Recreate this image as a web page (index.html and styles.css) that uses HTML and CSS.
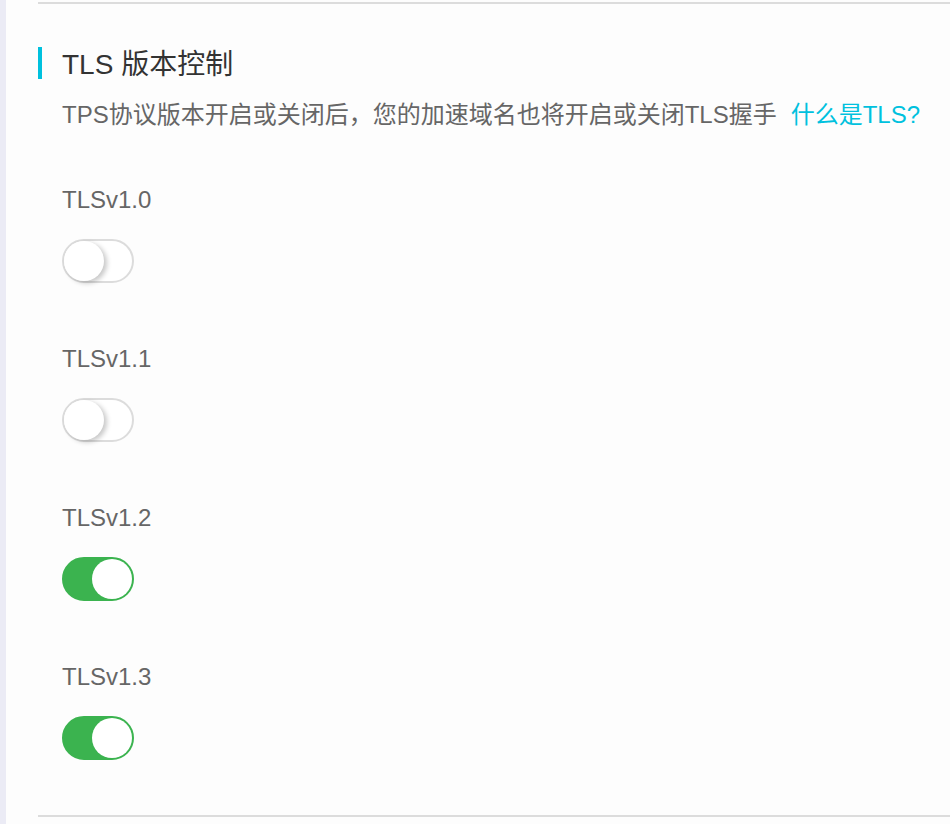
FILE: index.html
```html
<!DOCTYPE html>
<html lang="zh-CN">
<head>
<meta charset="utf-8">
<title>TLS 版本控制</title>
<link rel="stylesheet" href="styles.css">
</head>
<body>
<div class="page">
  <div class="side-strip"></div>
  <main class="main">
    <section class="section">
      <h2 class="title"><span class="title-text">TLS 版本控制</span></h2>
      <p class="desc">TPS协议版本开启或关闭后，您的加速域名也将开启或关闭TLS握手<a class="link" href="#">什么是TLS?</a></p>
      <div class="items">
        <div class="item">
          <div class="label">TLSv1.0</div>
          <span class="switch"></span>
        </div>
        <div class="item">
          <div class="label">TLSv1.1</div>
          <span class="switch"></span>
        </div>
        <div class="item">
          <div class="label">TLSv1.2</div>
          <span class="switch is-on"></span>
        </div>
        <div class="item">
          <div class="label">TLSv1.3</div>
          <span class="switch is-on"></span>
        </div>
      </div>
    </section>
  </main>
</div>
</body>
</html>
```

FILE: styles.css
```css
html, body {
  margin: 0;
  padding: 0;
  background: #fdfdfd;
}

body {
  font-family: "Liberation Sans", "Noto Sans CJK SC", sans-serif;
  color: #666;
}

.page {
  display: flex;
  min-height: 824px;
}

.side-strip {
  width: 6px;
  flex: none;
  background: #ebebf5;
}

.main {
  flex: 1;
  padding-left: 32px;
  padding-top: 2px;
}

.section {
  border-top: 2px solid #dcdcdc;
  border-bottom: 2px solid #dcdcdc;
  padding-top: 43px;
  padding-bottom: 55px;
}

.title {
  margin: 0;
  font-size: 28px;
  font-weight: normal;
  line-height: 32px;
  height: 32px;
  color: #333;
  border-left: 4px solid #00c1de;
  padding-left: 20px;
}

.title-text {
  display: inline-block;
  transform: translateY(2px);
}

.desc {
  margin: 20px 0 0 24px;
  font-size: 24px;
  line-height: 32px;
  color: #666;
  white-space: nowrap;
}

.link {
  color: #00c1de;
  text-decoration: none;
  margin-left: 14px;
}

.items {
  display: flex;
  flex-direction: column;
  gap: 60px;
  margin: 53px 0 0 24px;
}

.item {
  display: flex;
  flex-direction: column;
  align-items: flex-start;
  gap: 23px;
}

.label {
  font-size: 24px;
  line-height: 32px;
  color: #666;
}

.switch {
  position: relative;
  display: block;
  width: 72px;
  height: 44px;
  box-sizing: border-box;
  border: 2px solid #dcdcdc;
  border-radius: 22px;
  background: #fff;
}

.switch::after {
  content: "";
  position: absolute;
  top: 0;
  left: 0;
  width: 40px;
  height: 40px;
  border-radius: 50%;
  background: #fff;
  box-shadow: 3px 2px 5px rgba(0, 0, 0, 0.22);
}

.switch.is-on {
  background: #3bb34f;
  border-color: #3bb34f;
}

.switch.is-on::after {
  left: 28px;
  box-shadow: none;
}
```
